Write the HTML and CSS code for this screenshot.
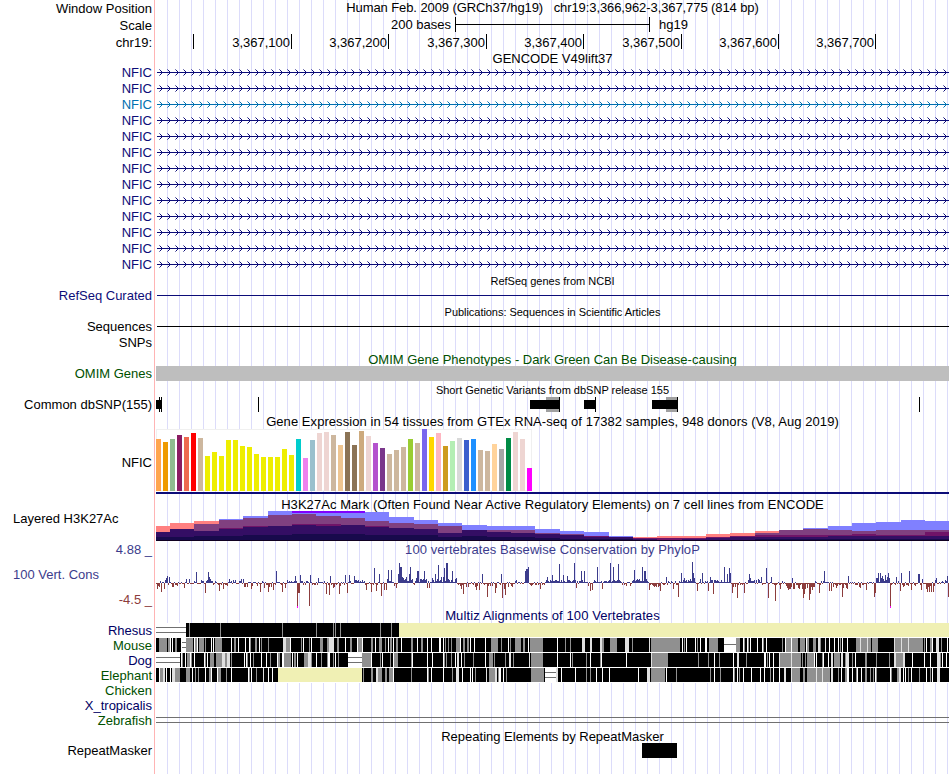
FILE: index.html
```html
<!DOCTYPE html>
<html lang="en">
<head>
<meta charset="utf-8">
<title>Genome Browser hg19 chr19:3,366,962-3,367,775</title>
<link rel="stylesheet" href="styles.css">
</head>
<body>
<main class="browser">
  <div class="row h17"><div class="label">Window Position</div><div class="plot title top">Human Feb. 2009 (GRCh37/hg19) &nbsp; chr19:3,366,962-3,367,775 (814 bp)</div></div>
  <div class="row h17"><div class="label">Scale</div><div class="plot scale"><span class="bases">200 bases</span><span class="bar"></span><span>hg19</span></div></div>
  <div class="row h17"><div class="label">chr19:</div><div class="plot ruler" id="ruler"></div></div>
  <div class="title-row h13"><div class="title">GENCODE V49lift37</div></div>
  <div id="genes"></div>
  <div class="title-row small h16"><div class="title">RefSeq genes from NCBI</div></div>
  <div class="row h16 navy"><div class="label">RefSeq Curated</div><div class="plot"><div class="line"></div></div></div>
  <div class="title-row small pubs h15"><div class="title">Publications: Sequences in Scientific Articles</div></div>
  <div class="row h16"><div class="label">Sequences</div><div class="plot"><div class="line"></div></div></div>
  <div class="row h16"><div class="label">SNPs</div><div class="plot"></div></div>
  <div class="title-row low green h15"><div class="title">OMIM Gene Phenotypes - Dark Green Can Be Disease-causing</div></div>
  <div class="row h15 green"><div class="label">OMIM Genes</div><div class="plot omim"></div></div>
  <div class="title-row small h16"><div class="title">Short Genetic Variants from dbSNP release 155</div></div>
  <div class="row h15"><div class="label">Common dbSNP(155)</div><div class="plot"><svg id="snp" width="793" height="15"></svg></div></div>
  <div class="title-row expr wide h17"><div class="title">Gene Expression in 54 tissues from GTEx RNA-seq of 17382 samples, 948 donors (V8, Aug 2019)</div></div>
  <div class="row gtex"><div class="label">NFIC</div><div class="plot"><div class="bars" id="gtex"></div></div></div>
  <div class="title-row over wide h17"><div class="title">H3K27Ac Mark (Often Found Near Active Regulatory Elements) on 7 cell lines from ENCODE</div></div>
  <div class="row h30"><div class="label left">Layered H3K27Ac</div><div class="plot"><svg id="h3k" width="793" height="30"></svg></div></div>
  <div class="row phylo"><div class="label stack"><span class="blue max">4.88 _</span><span class="blue name">100 Vert. Cons</span><span class="red min">-4.5 _</span></div>
    <div class="plot column"><div class="title blue wide">100 vertebrates Basewise Conservation by PhyloP</div><svg id="cons" width="793" height="51"></svg></div></div>
  <div class="title-row multiz wider h14"><div class="title">Multiz Alignments of 100 Vertebrates</div></div>
  <div id="multiz"></div>
  <div class="title-row low h15"><div class="title">Repeating Elements by RepeatMasker</div></div>
  <div class="row h15"><div class="label">RepeatMasker</div><div class="plot"><div class="repeat"></div></div></div>
</main>
<script src="tracks.js"></script>
</body>
</html>
```
FILE: styles.css
```css
body { margin: 0; background: #fff; }
.browser {
  width: 949px; height: 774px; overflow: hidden;
  font: 13px/16px "Liberation Sans", Arial, sans-serif; color: #000;
  background:
    linear-gradient(#ffb4b4, #ffb4b4) 154px 0 / 1px 100% no-repeat,
    repeating-linear-gradient(90deg, transparent 0 11px, #dcdcfa 11px 12px) 156px 0 no-repeat;
}
svg { display: block; shape-rendering: crispEdges; }
.row { display: flex; }
.label { width: 152px; margin-right: 4px; text-align: right; white-space: nowrap; flex: none; }
.label.left { text-align: left; padding-left: 13px; width: 139px; }
.plot { width: 793px; flex: none; }
.title-row { padding-left: 156px; }
.title { text-align: center; white-space: nowrap; }
.title.top { line-height: 16px; letter-spacing: -.09px; }
.wide { letter-spacing: .06px; }
.wider { letter-spacing: .1px; }
.h13 { height: 13px; line-height: 16px; }
.h14 { height: 14px; line-height: 14px; }
.h15 { height: 15px; line-height: 15px; }
.h16 { height: 16px; }
.h17 { height: 17px; line-height: 17px; }
.h30 { height: 30px; line-height: 16px; }
.low { line-height: 17px; }
.expr { line-height: 19px; }
.small { font-size: 11px; line-height: 18px; }
.pubs { line-height: 16px; letter-spacing: -.04px; }
.navy { color: #0c0c78; }
.known { color: #0070b0; }
.green { color: #005000; }
.blue { color: #3c3c8c; }
.red { color: #8c3c3c; }
.multiz { color: #000064; }
#genes .label { line-height: 18px; }
.line { height: 1px; margin: 7px 0 0 1px; background: currentColor; }
.scale { display: flex; line-height: 16px; }
.bases { width: 295px; text-align: right; }
.bar { width: 193px; height: 15px; margin: 0 9px 0 4px; border: solid #000; border-width: 0 1px; background: linear-gradient(#000, #000) 0 7px / 100% 1px no-repeat; }
.ruler { display: flex; }
.tick { box-sizing: border-box; height: 15px; text-align: right; padding-right: 1px; border-right: 1px solid #000; }
.omim { background: #bebebe; }
.gtex { height: 65px; line-height: 67px; }
.gtex .plot { border-bottom: 2px solid #0c0c78; height: 63px; }
.bars { display: flex; align-items: flex-end; gap: 2px; width: 376px; height: 62px; background: #fff; outline: 1px solid #f0f0f0; outline-offset: -1px; }
.bars i { width: 5px; flex: none; position: relative; }
.over { position: relative; z-index: 1; line-height: 22px; }
.phylo { height: 68px; }
.stack { display: flex; flex-direction: column; padding-top: 1px; }
.stack .name { text-align: left; padding-left: 13px; margin: 9px 0; }
.column .title { height: 16px; line-height: 18px; }
.align { height: 15px; line-height: 16px; }
.repeat { width: 35px; height: 15px; margin-left: 486px; background: #000; }
```
FILE: tracks.js
```js
const $ = id => document.getElementById(id);
const rect = (x, y, w, h, c) => `<rect x="${x}" y="${y}" width="${w}" height="${h}" fill="${c}"/>`;

// Ruler: distance between ticks is one hundred bases
let last = 156;
$('ruler').innerHTML = [194, 292, 389, 487, 584, 682, 779, 876].map((x, i) => {
  const w = x - last; last = x;
  return `<div class="tick" style="width:${w}px">${i ? '3,367,' + i + '00' : ''}</div>`;
}).join('');

// Gene models: each chevron is a core of full-strength pixels with fainter tips
let core = '', tips = '';
for (let x = 3; x < 793; x += 8) {
  core += `M${x + 1} 6h1v1h-1zM${x + 2} 7h1v1h-1zM${x + 2} 9h1v1h-1zM${x + 1} 10h1v1h-1z`;
  tips += `M${x} 5h1v1h-1zM${x} 11h1v1h-1z`;
}
for (let i = 0; i < 13; i++) {
  $('genes').innerHTML += `<div class="row h16 ${i === 2 ? 'known' : 'navy'}"><div class="label">NFIC</div><div class="plot"><svg width="793" height="16" fill="currentColor"><rect x="1" y="8" width="792" height="1"/><path d="${core}"/><path d="${tips}" opacity=".55"/></svg></div></div>`;
}

$('snp').innerHTML = [[0,3,5,9],[3,0,1,15],[5,0,1,15],[102,0,1,15],[763,0,1,15]].map(r => rect(...r, '#000')).join('')
  + rect(390,0,13,15,'#a0a0a0') + rect(374,3,29,9,'#000') + rect(403,0,1,15,'#000')
  + rect(428,3,11,9,'#000') + rect(439,0,1,15,'#000')
  + rect(510,0,11,15,'#a0a0a0') + rect(496,3,25,9,'#000') + rect(521,0,1,15,'#000');

const heights = [52,49,52,56,54,58,53,35,39,35,51,51,45,44,37,34,34,34,42,36,52,33,51,58,59,56,46,59,46,60,55,48,43,37,41,44,52,48,62,54,58,45,50,53,51,52,41,40,47,42,53,59,52,23];
const y = 'eeee00', tan = 'cdb79e', pink = 'eed5d2';
const colors = ['ffa54f','ee9a00','8fbc8f','8b1c62','ee6a50','ff0000',tan,y,y,y,y,y,y,y,y,y,y,y,y,y,'00cdcd','ee82ee','9ac0cd',pink,pink,tan,'eec591','8b7355','8b7355','cdaa7d',pink,'b452cd','7a378b',tan,tan,tan,'9acd32',tan,'7a67ee','ffd700','ffb6c1','cd9b1d','b4eeb4','d9d9d9','3a5fcd','1e90ff',tan,tan,'ffd39b','a6a6a6','008b45',pink,pink,'ff00ff'];
$('gtex').innerHTML = heights.map((h, i) => `<i style="height:${h}px;background:#${colors[i]}"></i>`).join('');

// Stepped signal: x, heights of red, blue, mauve, maroon, violet, indigo
const signal = [
[156,15,0,0,0,9,4],[170,18,0,0,0,12,4],[194,20,0,17,0,10,5],[219,0,22,21,13,12,5],[243,0,25,23,15,14,6],[268,0,30,26,0,15,6],
[292,0,28,27,17,16,7],[316,0,28,25,17,15,7],[341,0,28,23,0,16,7],[365,0,29,20,15,14,6],[389,0,24,18,0,13,6],[414,0,21,17,0,12,6],
[438,0,18,15,0,8,4],[462,0,16,0,0,11,5],[487,0,15,11,0,9,4],[511,0,15,11,0,8,4],[535,0,12,8,0,7,3],[560,0,10,7,0,6,2],
[584,0,9,0,5,4,2],[609,0,5,0,0,4,2],[633,4,0,0,3,2,1],[657,5,0,0,3,1,1],[682,5,0,0,3,2,1],[706,7,0,0,4,3,1],
[730,8,0,0,5,4,1],[755,10,0,8,6,4,2],[779,0,0,11,6,4,2],[803,0,13,12,6,4,2],[828,0,15,11,6,5,2],[852,0,18,10,7,5,2],
[876,0,19,11,6,5,2],[901,0,21,11,6,5,2],[925,0,20,11,9,5,2],[949]];
const fills = ['#ff8080','#8080ff','#804080','#701468','#340e64','#180a4c'];
let s = '';
for (let i = 0; i + 1 < signal.length; i++) {
  const [x, ...v] = signal[i], w = signal[i + 1][0] - x;
  v.forEach((h, k) => { if (h) s += rect(x - 156, 30 - h, w, h, fills[k]); });
}
$('h3k').innerHTML = s + rect(136, 0, 73, 2, '#8000ff') + rect(0, 29, 793, 1, '#100020');

// Conservation: background level plus the strong peaks
let seed = 19;
const rnd = () => (seed = seed * 16807 % 2147483647) / 2147483647;
const zones = [[156,-1],[165,2],[171,-1],[184,1],[214,-2],[228,1],[242,-2],[273,-1],[286,1],[292,0],[312,0],[325,-2],[341,1],[365,-1],[386,4],[394,-1],[398,8],[412,1],[416,4],[428,1],[431,5],[450,2],[457,-2],[478,0],[486,-2],[516,2],[530,-1],[545,3],[575,1],[588,-1],[593,3],[621,-1],[632,4],[649,-2],[665,0],[683,5],[695,1],[708,3],[731,-2],[747,2],[766,-1],[785,-3],[815,0],[829,-3],[848,0],[856,-2],[876,6],[890,0],[900,-1],[921,-1],[925,-3],[935,1]];
const peaks = {157:-6,159:-4,161:-9,164:-6,166:5,167:7,169:6,172:-4,184:-5,186:4,189:4,196:11,205:-10,208:11,209:6,219:-8,223:-6,229:4,233:3,241:4,243:4,251:-6,260:-9,264:-5,268:-9,273:-7,276:12,282:-9,285:-5,295:7,297:-25,298:-10,299:-10,300:8,309:-23,310:8,318:5,326:-11,329:-12,330:7,333:-5,339:-11,345:8,347:-10,349:8,354:7,366:-7,371:-9,374:15,376:-8,379:9,381:-13,384:-7,386:-7,388:13,391:13,396:-5,399:20,400:16,401:16,410:16,417:12,418:12,424:12,427:-5,429:-5,435:9,438:18,444:15,446:20,447:20,452:12,463:-11,466:-4,468:-4,476:-7,479:-7,482:9,487:-14,495:-10,501:9,502:-15,505:-12,508:-4,525:12,526:14,527:14,528:16,540:-6,547:6,552:8,559:19,563:8,567:7,574:20,576:-5,581:12,584:12,590:-8,592:-7,597:16,602:-6,610:20,613:16,618:19,634:13,642:16,644:12,645:12,649:-7,660:-8,666:6,673:-6,678:-14,681:10,692:21,693:10,697:-8,702:10,708:-8,710:6,713:-11,724:16,727:9,729:15,730:10,732:-10,735:-4,737:-15,744:-10,749:9,750:5,761:6,766:15,768:-15,771:6,775:-18,780:-6,787:-5,792:5,803:-15,804:-11,807:-5,809:-17,810:-11,819:-10,824:12,829:-8,831:-8,836:-5,842:-14,843:-5,848:7,859:-4,866:-7,874:-14,875:-10,878:10,880:10,885:8,888:10,890:-25,896:6,900:-8,901:10,903:-4,909:12,911:-7,918:9,919:9,921:-7,922:4,927:-9,929:-9,931:-9,933:-9,936:5,947:7,948:-14};
s = '';
for (let x = 156; x < 949; x++) {
  let m = 0;
  for (const z of zones) if (x >= z[0]) m = z[1];
  let h = peaks[x];
  if (h === undefined) { const r = rnd(); h = Math.round(m > 2 ? m * (.2 + r) : m * r * r * 2.2 + (rnd() - .5) * 4); }
  if (!h) h = rnd() > .5 ? 1 : -1;
  s += h > 0 ? rect(x - 156, 26 - h, 1, h, '#3c3c8c') : rect(x - 156, 26, 1, -h, '#8c3c3c');
}
$('cons').innerHTML = s + rect(141, 49, 1, 2, '#f0f') + rect(734, 49, 1, 2, '#f0f');

// Alignments: colour key followed by start,width pairs over a black band
const rows = [
 ['Rhesus','multiz','d156,30 g189,1 220,1 282,1 316,1 333,1 335,1 340,1 380,1 391,1 y399,550'],
 ['Mouse','green','g159,8 168,2 175,2 d182,4 g186,7 195,3 199,5 205,1 215,7 234,2 250,1 255,2 261,1 268,1 286,4 301,1 309,1 320,3 327,2 337,2 350,2 358,4 371,2 379,3 385,1 390,2 396,2 411,2 421,2 445,1 448,1 451,1 456,4 463,2 467,2 491,7 501,1 510,1 515,6 523,2 530,13 565,1 570,1 591,1 602,2 610,7 632,1 651,29 684,1 697,1 709,9 736,4 744,1 748,1 763,1 782,1 786,12 800,5 807,2 813,3 818,3 840,1 856,15 872,18 895,28 924,1 930,2 941,1 w170,1 172,1 181,1 194,1 197,1 211,1 213,1 231,1 238,1 245,1 249,1 259,1 l283,3 w290,1 303,1 311,1 l329,5 w345,1 357,1 362,1 375,1 388,1 393,1 401,1 417,1 427,1 431,1 439,2 443,1 460,1 470,1 474,1 485,1 508,1 528,1 557,1 l582,3 590,2 600,2 625,4 649,1 w682,1 686,1 695,1 700,1 705,2 s724,12 w743,1 747,1 750,1 757,1 762,1 766,1 785,1 791,1 806,1 l818,2 825,1 w829,1 834,1 838,1 842,1 847,1 l860,1 867,1 894,1 901,1 908,1 k878,16 w926,1 932,1 l936,3 w947,1'],
 ['Dog','multiz','d156,24 g182,1 187,3 191,1 205,1 210,4 216,6 223,7 231,1 247,1 253,1 270,1 278,2 284,7 294,2 304,4 311,1 321,1 327,2 333,1 338,1 362,9 380,1 390,1 394,4 411,1 444,1 446,1 451,1 464,1 473,1 489,4 494,1 505,1 513,1 531,12 572,1 586,1 600,1 652,16 698,1 708,1 719,1 746,1 767,1 780,7 787,14 802,1 805,1 807,8 822,1 834,6 845,3 852,1 865,2 876,1 889,1 894,10 940,1 w181,1 185,1 190,1 194,1 204,1 207,1 l222,3 227,3 w244,1 246,1 250,1 261,1 266,1 277,1 282,2 292,1 297,1 l308,3 w316,1 328,2 335,1 d348,14 w371,1 382,1 393,1 412,1 427,1 432,1 443,1 455,1 l457,2 w461,1 485,1 l509,2 529,1 w557,1 570,1 590,1 601,1 626,1 l651,1 w714,1 733,1 l737,2 w764,2 769,1 773,1 l779,1 791,1 w814,1 816,1 823,1 828,1 l831,2 841,2 846,3 w855,1 l894,2 903,2 w912,1 924,1 930,1 l937,3 w942,1 946,1'],
 ['Elephant','green','g160,3 175,5 186,4 195,1 198,1 209,2 217,4 226,1 248,2 256,1 y278,84 g363,1 371,2 378,4 385,2 389,4 411,1 428,1 452,1 458,1 475,1 489,6 498,1 506,1 531,13 586,1 590,1 609,1 651,14 676,1 710,1 720,1 734,1 739,1 751,1 764,1 770,1 779,1 791,9 803,2 807,23 838,1 845,3 856,1 865,2 870,1 873,1 876,1 891,1 897,3 908,1 919,1 930,1 w159,1 l163,2 w166,1 170,1 l172,3 w192,1 205,1 211,1 217,1 231,1 248,1 251,1 l263,1 w268,1 272,1 l376,2 w393,1 427,1 431,1 443,1 l456,3 w462,1 470,1 472,1 l486,1 495,2 w499,2 503,1 d545,11 l556,2 w561,1 575,1 596,1 602,1 609,1 638,1 l647,3 w666,1 714,1 733,1 737,1 743,1 751,1 760,1 764,1 773,1 779,1 l784,2 791,1 l816,1 822,1 831,2 w841,1 847,2 852,1 857,1 861,1 875,1 890,1 l899,2 w903,1 905,1 911,1 926,1 932,1 l937,3'],
 ['Chicken','green','n156,793'], ['X_tropicalis','multiz','n156,793'], ['Zebrafish','green','n156,793 z156,793']];
const key = {g:'#909090', l:'#e0e0e0', w:'#fff', y:'#f0f0b4', k:'#000'};
for (const [name, cls, data] of rows) {
  let out = data[0] === 'n' ? '' : rect(0,14,793,1,'#fff') + rect(0,0,793,14,'#000'), c;
  for (let t of data.split(' ')) {
    if (/[a-z]/.test(t[0])) { c = t[0]; t = t.slice(1); }
    const [x, w] = t.split(',').map(Number), X = x - 156;
    if (key[c]) out += rect(X, 0, w, 14, key[c]);
    if (c === 'd' || c === 's') out += rect(X, 0, w, 14, '#fff');
    if (c === 's') out += rect(X, 6, w, 1, '#707070');
    if (c === 'd' || c === 'z') out += rect(X, 4, w, 1, '#707070') + rect(X, 9, w, 1, '#707070');
  }
  $('multiz').innerHTML += `<div class="row align ${cls}"><div class="label">${name}</div><div class="plot"><svg width="793" height="15">${out}</svg></div></div>`;
}
```
